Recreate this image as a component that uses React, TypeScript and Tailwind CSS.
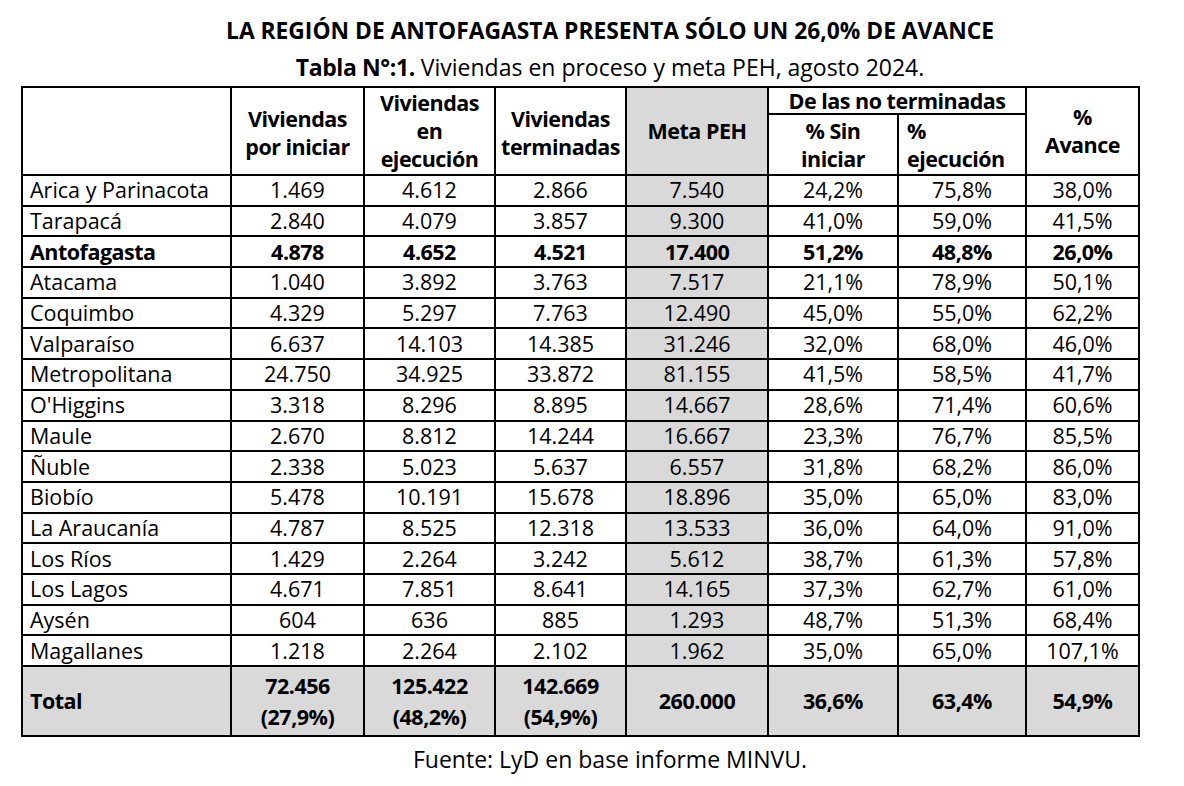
import React from "react";

type Row = [string, string, string, string, string, string, string, string];

const rows: Row[] = [
  ["Arica y Parinacota", "1.469", "4.612", "2.866", "7.540", "24,2%", "75,8%", "38,0%"],
  ["Tarapacá", "2.840", "4.079", "3.857", "9.300", "41,0%", "59,0%", "41,5%"],
  ["Antofagasta", "4.878", "4.652", "4.521", "17.400", "51,2%", "48,8%", "26,0%"],
  ["Atacama", "1.040", "3.892", "3.763", "7.517", "21,1%", "78,9%", "50,1%"],
  ["Coquimbo", "4.329", "5.297", "7.763", "12.490", "45,0%", "55,0%", "62,2%"],
  ["Valparaíso", "6.637", "14.103", "14.385", "31.246", "32,0%", "68,0%", "46,0%"],
  ["Metropolitana", "24.750", "34.925", "33.872", "81.155", "41,5%", "58,5%", "41,7%"],
  ["O'Higgins", "3.318", "8.296", "8.895", "14.667", "28,6%", "71,4%", "60,6%"],
  ["Maule", "2.670", "8.812", "14.244", "16.667", "23,3%", "76,7%", "85,5%"],
  ["Ñuble", "2.338", "5.023", "5.637", "6.557", "31,8%", "68,2%", "86,0%"],
  ["Biobío", "5.478", "10.191", "15.678", "18.896", "35,0%", "65,0%", "83,0%"],
  ["La Araucanía", "4.787", "8.525", "12.318", "13.533", "36,0%", "64,0%", "91,0%"],
  ["Los Ríos", "1.429", "2.264", "3.242", "5.612", "38,7%", "61,3%", "57,8%"],
  ["Los Lagos", "4.671", "7.851", "8.641", "14.165", "37,3%", "62,7%", "61,0%"],
  ["Aysén", "604", "636", "885", "1.293", "48,7%", "51,3%", "68,4%"],
  ["Magallanes", "1.218", "2.264", "2.102", "1.962", "35,0%", "65,0%", "107,1%"],
];

const font = { fontFamily: '"Open Sans", "Noto Sans", sans-serif' };

export default function App() {
  const b = "border-2 border-black";
  const hb = "border-2 border-black font-bold tracking-[-0.5px]";
  return (
    <div className="w-[1184px] h-[786px] bg-white text-black" style={font}>
      <div className="pt-[16px] pl-[36px] text-center font-bold text-[22.8px] leading-[30px] h-[46px]">
        LA REGIÓN DE ANTOFAGASTA PRESENTA SÓLO UN 26,0% DE AVANCE
      </div>
      <div className="mt-[6px] pl-[36px] text-center text-[23px] leading-[30px] h-[30px]">
        <span className="font-bold tracking-[-0.4px]">Tabla N°:1.</span> Viviendas en proceso y meta PEH, agosto 2024.
      </div>
      <table className="mt-[4px] ml-[21px] w-[1117px] table-fixed border-collapse text-[21.5px] leading-[28px]">
        <colgroup>
          <col className="w-[209px]" />
          <col className="w-[133px]" />
          <col className="w-[131px]" />
          <col className="w-[131px]" />
          <col className="w-[142px]" />
          <col className="w-[130px]" />
          <col className="w-[128px]" />
          <col className="w-[113px]" />
        </colgroup>
        <thead>
          <tr className="h-[27px]">
            <th rowSpan={2} className={b}></th>
            <th rowSpan={2} className={`${hb} pt-[3px]`}>
              Viviendas
              <br />
              por iniciar
            </th>
            <th rowSpan={2} className={hb}>
              Viviendas
              <br />
              en
              <br />
              ejecución
            </th>
            <th rowSpan={2} className={`${hb} pt-[3px]`}>
              Viviendas
              <br />
              terminadas
            </th>
            <th rowSpan={2} className={`${hb} bg-[#d9d9d9]`}>
              Meta PEH
            </th>
            <th colSpan={2} className={`${hb} leading-[24px]`}>
              De las no terminadas
            </th>
            <th rowSpan={2} className={hb}>
              %
              <br />
              Avance
            </th>
          </tr>
          <tr className="h-[61px]">
            <th className={hb}>
              % Sin
              <br />
              iniciar
            </th>
            <th className={`${hb} text-left pl-[8px]`}>
              %
              <br />
              ejecución
            </th>
          </tr>
        </thead>
        <tbody>
          {rows.map((r) => {
            const bold = r[0] === "Antofagasta";
            return (
              <tr key={r[0]} className={`h-[30.7px] ${bold ? "font-bold tracking-[-0.5px]" : ""}`}>
                <td className={`${b} text-left pl-[7px] whitespace-nowrap`}>{r[0]}</td>
                {r.slice(1).map((v, i) => (
                  <td key={i} className={`${b} text-center ${i === 3 ? "bg-[#d9d9d9]" : ""}`}>
                    {v}
                  </td>
                ))}
              </tr>
            );
          })}
          <tr className="h-[70px] bg-[#d9d9d9] font-bold tracking-[-0.5px]">
            <td className={`${b} text-left pl-[7px]`}>Total</td>
            <td className={`${b} text-center leading-[31px]`}>
              72.456
              <br />
              (27,9%)
            </td>
            <td className={`${b} text-center leading-[31px]`}>
              125.422
              <br />
              (48,2%)
            </td>
            <td className={`${b} text-center leading-[31px]`}>
              142.669
              <br />
              (54,9%)
            </td>
            <td className={`${b} text-center`}>260.000</td>
            <td className={`${b} text-center`}>36,6%</td>
            <td className={`${b} text-center`}>63,4%</td>
            <td className={`${b} text-center`}>54,9%</td>
          </tr>
        </tbody>
      </table>
      <div className="mt-[7px] pl-[36px] text-center text-[23px] leading-[30px]">
        Fuente: LyD en base informe MINVU.
      </div>
    </div>
  );
}
